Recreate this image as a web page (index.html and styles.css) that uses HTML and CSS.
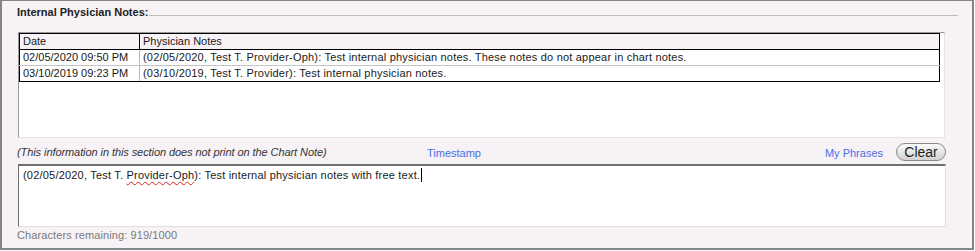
FILE: index.html
```html
<!DOCTYPE html>
<html>
<head>
<meta charset="utf-8">
<link rel="stylesheet" href="styles.css">
</head>
<body>
<div class="panel">
  <div class="title-row">
    <span class="title">Internal Physician Notes:</span>
    <span class="rule"></span>
  </div>
  <div class="listbox">
    <table class="notes">
      <thead>
        <tr><th class="c-date">Date</th><th class="c-note">Physician Notes</th></tr>
      </thead>
      <tbody>
        <tr class="row-a"><td class="c-date">02/05/2020 09:50 PM</td><td class="c-note">(02/05/2020, Test T. Provider-Oph): Test internal physician notes. These notes do not appear in chart notes.</td></tr>
        <tr class="row-b"><td class="c-date">03/10/2019 09:23 PM</td><td class="c-note">(03/10/2019, Test T. Provider): Test internal physician notes.</td></tr>
      </tbody>
    </table>
  </div>
  <div class="info-row">
    <span class="disclaimer">(This information in this section does not print on the Chart Note)</span>
    <a class="link">Timestamp</a>
    <span class="spacer"></span>
    <a class="link">My Phrases</a>
    <button class="clear">Clear</button>
  </div>
  <div class="editor">(02/05/2020, Test T. <span class="misspelled">Provider-Oph</span>): Test internal physician notes with free text.<span class="caret"></span></div>
  <div class="remaining">Characters remaining: 919/1000</div>
</div>
</body>
</html>
```
FILE: styles.css
```css
html, body {
  margin: 0;
  padding: 0;
  background: #ffffff;
}
body {
  font-family: "Liberation Sans", Arial, sans-serif;
  font-size: 11px;
  color: #1a1a1a;
}
.panel {
  box-sizing: border-box;
  width: 974px;
  height: 250px;
  background: #f6f2f6;
  border-top: 1px solid #858585;
  border-left: 2px solid #858585;
  border-right: 2px solid #858585;
  border-bottom: 2px solid #858585;
  display: flex;
  flex-direction: column;
}
.title-row {
  display: flex;
  align-items: flex-start;
  margin: 4px 14px 0 15px;
  height: 14px;
  line-height: 14px;
}
.title {
  font-weight: bold;
  color: #222;
  white-space: nowrap;
}
.rule {
  flex: 1;
  height: 10px;
  border-bottom: 1px solid #bcbcbc;
  margin-left: 1px;
}
.listbox {
  box-sizing: border-box;
  margin: 13px 0 0 16px;
  width: 927px;
  height: 106px;
  background: #ffffff;
  border-top: 1px solid #999;
  border-left: 1px solid #999;
  border-right: 1px solid #e4e0e4;
  border-bottom: 1px solid #e4e0e4;
}
.notes {
  border-collapse: collapse;
  width: 921px;
  border-left: 1px solid #000;
  border-right: 1px solid #000;
  font-size: 11px;
}
.notes th, .notes td {
  text-align: left;
  font-weight: normal;
  padding: 0 0 0 3px;
  height: 15px;
  line-height: 15px;
  white-space: nowrap;
}
.notes td.c-note {
  letter-spacing: 0.2px;
}
.notes th {
  background: #f6f2f6;
  border-top: 1px solid #000;
  border-bottom: 1px solid #000;
  height: 14px;
}
.notes th.c-date {
  border-right: 1px solid #000;
}
.notes td.c-date {
  border-right: 1px solid #b8b8b8;
}
.c-date {
  width: 116px;
}
.row-a td {
  border-bottom: 1px solid #c4c4c4;
}
.row-b td {
  border-bottom: 1px solid #000;
}
.info-row {
  display: flex;
  align-items: center;
  height: 19px;
  margin: 4px 26px 0 15px;
}
.disclaimer {
  width: 410px;
  font-style: italic;
  font-size: 11px;
  letter-spacing: -0.08px;
  color: #333;
  white-space: nowrap;
}
.link {
  color: #4b6fe3;
  font-size: 11px;
  white-space: nowrap;
  margin-top: 2px;
}
.spacer {
  flex: 1;
}
.clear {
  margin-left: 13px;
  box-sizing: border-box;
  width: 50px;
  height: 18px;
  padding: 0;
  border: 1px solid #8a8a8a;
  border-radius: 9px;
  background: linear-gradient(#fbfbfb, #e2e2e2 60%, #d2d2d2);
  font-family: "Liberation Sans", Arial, sans-serif;
  font-size: 14px;
  color: #1e1e1e;
  line-height: 16px;
}
.editor {
  box-sizing: border-box;
  margin: 3px 0 0 16px;
  width: 928px;
  height: 63px;
  background: #ffffff;
  border-top: 2px solid #707070;
  border-left: 1px solid #707070;
  border-right: 1px solid #e0dce0;
  border-bottom: 1px solid #e0dce0;
  padding: 2px 4px;
  line-height: 15px;
  font-size: 11px;
  letter-spacing: 0.2px;
  color: #1a1a1a;
}
.misspelled {
  text-decoration: underline wavy #e02020 1px;
  text-underline-offset: 2px;
}
.caret {
  display: inline-block;
  width: 0;
  height: 14px;
  border-left: 1px solid #000;
  vertical-align: -3px;
  margin-left: 1px;
}
.remaining {
  margin: 1px 0 0 15px;
  line-height: 14px;
  font-size: 11px;
  letter-spacing: 0.1px;
  color: #7a7a7a;
}
```
